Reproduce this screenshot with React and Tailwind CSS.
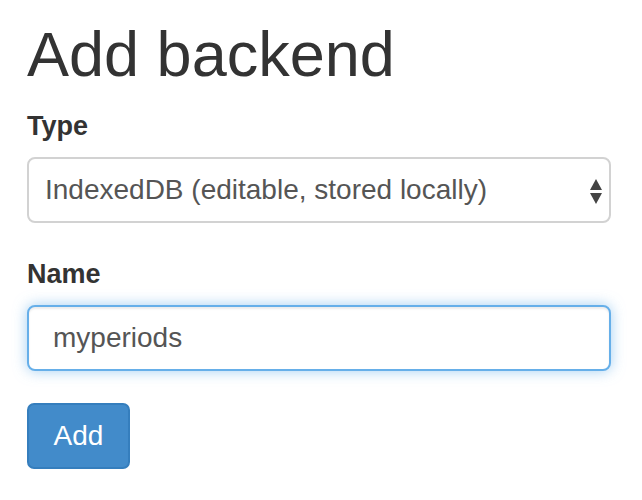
import React from 'react';

export default function App() {
  return (
    <div className="min-h-[500px] bg-white pl-[27px] pr-[31px] pt-[20px] text-[#333]" style={{ fontFamily: '"Liberation Sans", Arial, sans-serif' }}>
      <h1 className="text-[63px] leading-[68px] font-normal">Add backend</h1>

      {/* Type */}
      <div className="mt-[21px]">
        <label className="block text-[27px] leading-[34px] font-bold">Type</label>
        <div className="relative mt-[14px] h-[66px] rounded-[8px] border-2 border-[#d2d2d2] bg-white flex items-center pl-[16px]">
          <span className="text-[28px] text-[#555]">IndexedDB (editable, stored locally)</span>
          <svg className="absolute right-[6px] top-[20px]" width="14" height="26" viewBox="0 0 14 26">
            <polygon points="7,0 13,11 1,11" fill="#444" />
            <polygon points="1,14 13,14 7,25" fill="#444" />
          </svg>
        </div>
      </div>

      {/* Name */}
      <div className="mt-[34px]">
        <label className="block text-[27px] leading-[34px] font-bold">Name</label>
        <div className="mt-[14px] h-[66px] rounded-[8px] border-2 border-[#66afe9] bg-white flex items-center pl-[24px] shadow-[inset_0_2px_2px_rgba(0,0,0,0.075),0_0_14px_rgba(102,175,233,0.6)]">
          <span className="text-[28px] text-[#555]">myperiods</span>
        </div>
      </div>

      <button className="mt-[32px] h-[66px] w-[103px] rounded-[7px] border-2 border-[#357ebd] bg-[#428bca] text-[28px] text-white">
        Add
      </button>
    </div>
  );
}
